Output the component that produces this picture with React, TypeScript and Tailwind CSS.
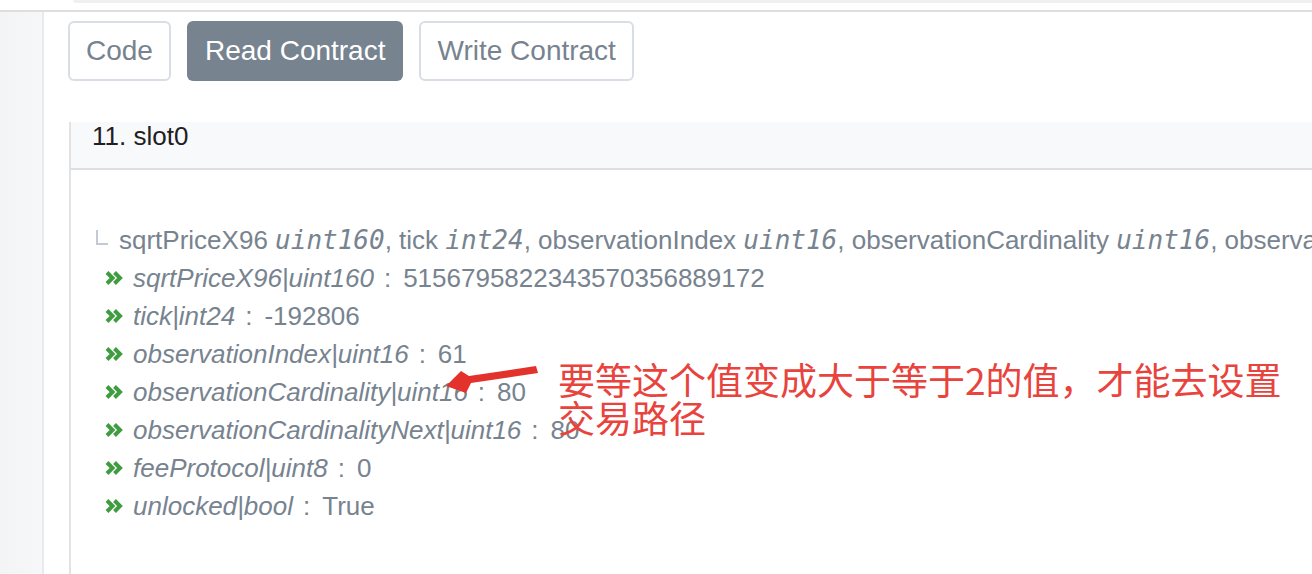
import React from "react";

const rows: [string, string][] = [
  ["sqrtPriceX96|uint160", "5156795822343570356889172"],
  ["tick|int24", "-192806"],
  ["observationIndex|uint16", "61"],
  ["observationCardinality|uint16", "80"],
  ["observationCardinalityNext|uint16", "80"],
  ["feeProtocol|uint8", "0"],
  ["unlocked|bool", "True"],
];

const params: [string, string][] = [
  ["sqrtPriceX96", "uint160"],
  ["tick", "int24"],
  ["observationIndex", "uint16"],
  ["observationCardinality", "uint16"],
  ["observationCardinalityNext", "uint16"],
  ["feeProtocol", "uint8"],
  ["unlocked", "bool"],
];

function Chevrons() {
  return (
    <svg width="18" height="16" viewBox="0 0 18 16" className="shrink-0">
      <path
        d="M2 2.5 L7.5 8 L2 13.5 M9.5 2.5 L15 8 L9.5 13.5"
        fill="none"
        stroke="#3f9c3f"
        strokeWidth="4"
        strokeLinejoin="miter"
      />
    </svg>
  );
}

export default function App() {
  const sans = { fontFamily: '"Liberation Sans", Arial, sans-serif' };
  return (
    <div
      className="relative w-[1312px] h-[574px] overflow-hidden bg-white flex flex-col"
      style={sans}
    >
      <div className="h-[10px] shrink-0">
        <div className="ml-[73px] h-[3px] bg-[#f0f0f0] rounded-bl-[6px]" />
      </div>
      <div className="h-[2px] shrink-0 bg-[#dedede]" />
      <div className="flex flex-1 min-h-0">
        <div className="w-[44px] shrink-0 bg-gradient-to-r from-[#f3f4f6] to-[#f6f7f9] border-r-2 border-[#e8eaf1]" />
        <div className="flex-1 min-w-0 pl-[24px] pt-[9px] flex flex-col">
          <div className="flex gap-[16px] h-[60px]">
            <div className="h-[60px] px-[16px] flex items-center border-2 border-[#d9dee6] rounded-[6px] text-[28px] text-[#77838f]">
              Code
            </div>
            <div className="h-[60px] px-[18px] flex items-center bg-[#77838f] rounded-[6px] text-[28px] text-white">
              Read Contract
            </div>
            <div className="h-[60px] px-[16px] flex items-center border-2 border-[#d9dee6] rounded-[6px] text-[28px] text-[#77838f]">
              Write Contract
            </div>
          </div>
          <div className="mt-[41px] ml-[1px] flex-1 flex flex-col border-l-2 border-[#e2e2e2]">
            <div className="h-[48px] shrink-0 bg-[#f8f9fa] border-b-2 border-[#dcdfe3] pl-[21px] text-[26px] leading-[28px] text-[#1e2022]">
              11. slot0
            </div>
            <div className="flex-1 pt-[51px] pl-[25px] text-[26px] leading-[38px] text-[#77838f]">
              <div className="flex items-center whitespace-nowrap">
                <span className="inline-block w-[12px] h-[15px] border-l-2 border-b-2 border-[#c4cad4] mr-[11px] -mt-[6px] shrink-0" />
                <span>
                  {params.map(([n, t], i) => (
                    <React.Fragment key={n}>
                      {n}{" "}
                      <i style={{ fontFamily: '"DejaVu Sans Mono", monospace', fontSize: "26px" }}>{t}</i>
                      {i < params.length - 1 ? ", " : ""}
                    </React.Fragment>
                  ))}
                </span>
              </div>
              {rows.map(([name, val]) => (
                <div key={name} className="flex items-center whitespace-nowrap pl-[9px]">
                  <Chevrons />
                  <i className="ml-[10px]">{name}</i>
                  <span className="ml-[10px]">:</span>
                  <span className="ml-[12px]">{val}</span>
                </div>
              ))}
            </div>
          </div>
        </div>
      </div>

      <svg className="absolute left-0 top-0 pointer-events-none" width="1312" height="574">
        <polygon
          points="536,366 538,373 471,383 466,393 446,386 461,371 469,376"
          fill="#e3322b"
        />
      </svg>
      <div
        className="absolute left-[558px] top-[360px] text-[37px] leading-[38px] text-[#e8433d] whitespace-nowrap"
        style={{ fontFamily: '"Noto Sans CJK SC", "Liberation Sans", sans-serif' }}
      >
        <div>要等这个值变成大于等于2的值，才能去设置</div>
        <div>交易路径</div>
      </div>
    </div>
  );
}
